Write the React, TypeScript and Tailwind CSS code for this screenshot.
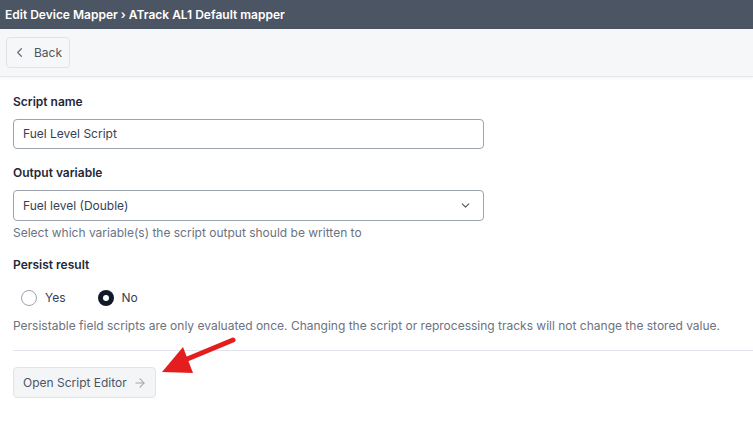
import { ArrowRight, ChevronDown, ChevronLeft } from "lucide-react";

const font = { fontFamily: "Inter, 'Noto Sans', sans-serif" };

const Label = ({ children }: { children: string }) => (
  <div className="text-[12px] font-semibold leading-[18px] text-[#1f2937]">{children}</div>
);

const Radio = ({ label, checked }: { label: string; checked?: boolean }) => (
  <label className="flex h-[18px] items-center gap-[8px]">
    {checked ? (
      <span className="flex h-4 w-4 items-center justify-center rounded-full bg-[#111827]">
        <span className="h-[6px] w-[6px] rounded-full bg-white" />
      </span>
    ) : (
      <span className="h-4 w-4 rounded-full border border-[#9ca3af] bg-white" />
    )}
    <span className="text-[12px] text-[#374151]">{label}</span>
  </label>
);

export default function App() {
  return (
    <div className="relative min-h-[427px] bg-white" style={font}>
      <div className="flex h-[29px] items-center bg-[#4b5563] px-[5px] text-[12px] font-semibold text-white">
        Edit Device Mapper › ATrack AL1 Default mapper
      </div>
      <div className="flex h-[48px] items-center border-b border-[#e5e7eb] bg-[#f6f7f9] px-[6px] shadow-[0_1px_3px_rgba(0,0,0,0.06)]">
        <button className="flex h-[31px] w-[64px] items-center gap-[7px] rounded border border-[#e0e3e8] bg-[#f6f7f9] pl-[5px] text-[12px] text-[#4b5563]">
          <ChevronLeft size={15} strokeWidth={2} className="text-[#6b7280]" />
          Back
        </button>
      </div>
      <div className="pl-[13px] pt-[16px]">
        <div className="w-[471px]">
          <Label>Script name</Label>
          <div className="mt-[8px] flex h-[30px] items-center rounded border border-[#9ca3af] px-[9px] text-[12px] text-[#374151]">
            Fuel Level Script
          </div>
          <div className="mt-[15px]">
            <Label>Output variable</Label>
          </div>
          <div className="mt-[8px] flex h-[31px] items-center justify-between rounded border border-[#9ca3af] pl-[9px] pr-[11px] text-[12px] text-[#374151]">
            Fuel level (Double)
            <ChevronDown size={13} strokeWidth={2} className="text-[#4b5563]" />
          </div>
        </div>
        <div className="mt-[3px] text-[12px] leading-[18px] text-[#6b7280]">
          Select which variable(s) the script output should be written to
        </div>
        <div className="mt-[14px]">
          <Label>Persist result</Label>
        </div>
        <div className="mt-[15px] flex items-center gap-[32px] pl-[8px]">
          <Radio label="Yes" />
          <Radio label="No" checked />
        </div>
        <div className="mt-[10px] whitespace-nowrap text-[12px] leading-[18px] text-[#6b7280]">
          Persistable field scripts are only evaluated once. Changing the script or reprocessing tracks will not change the stored value.
        </div>
        <div className="mt-[15px] border-t border-[#e2e6ec]" />
        <div className="pt-[16px]">
          <button className="flex h-[31px] items-center gap-[6px] rounded border border-[#e0e3e8] bg-[#f4f5f7] pl-[9px] pr-[8px] text-[12px] text-[#4b5563]">
            Open Script Editor
            <ArrowRight size={14} strokeWidth={1.8} className="text-[#9ca3af]" />
          </button>
        </div>
      </div>
      <svg className="absolute left-0 top-0 pointer-events-none" width="753" height="427">
        <line x1="233" y1="340" x2="180" y2="362" stroke="#e41e1e" strokeWidth="5" strokeLinecap="round" />
        <polygon points="162,372 183,347 193,373" fill="#e41e1e" />
      </svg>
    </div>
  );
}
